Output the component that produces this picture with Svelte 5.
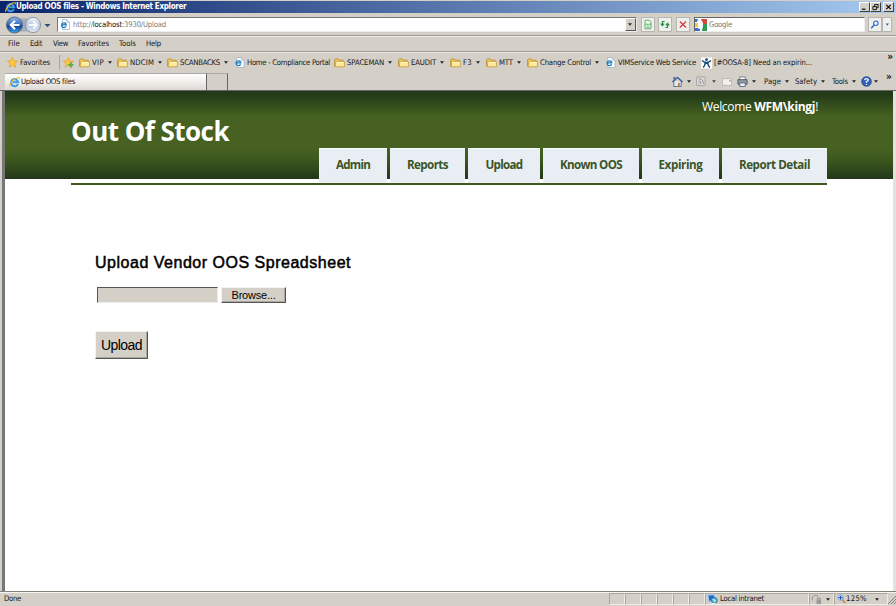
<script>
  const menus = [['File', 12, 22], ['Edit', 12, 23], ['View', 15, 25], ['Favorites', 31, 41], ['Tools', 17, 27], ['Help', 15, 30]];
  const favorites = [
    { icon: 'folder', label: 'VIP', text: 12, cell: 38, menu: true },
    { icon: 'folder', label: 'NDCIM', text: 24, cell: 50, menu: true },
    { icon: 'folder', label: 'SCANBACKS', text: 40, cell: 67, menu: true },
    { icon: 'page', label: 'Home - Compliance Portal', text: 83, cell: 100 },
    { icon: 'folder', label: 'SPACEMAN', text: 37, cell: 64, menu: true },
    { icon: 'folder', label: 'EAUDIT', text: 25, cell: 52, menu: true },
    { icon: 'folder', label: 'F3', text: 9, cell: 36, menu: true },
    { icon: 'folder', label: 'MTT', text: 14, cell: 41, menu: true },
    { icon: 'folder', label: 'Change Control', text: 51, cell: 78, menu: true },
    { icon: 'page', label: 'VIMService Web Service', text: 78, cell: 96 },
    { icon: 'person', label: '[#OOSA-8] Need an expirin...', text: 98, cell: 116 }
  ];
  const nav = [['Admin', 68, 34], ['Reports', 75, 41], ['Upload', 72, 37], ['Known OOS', 96, 62], ['Expiring', 77, 44], ['Report Detail', 105, 71]];

  // Spreads the letters so a label fills the given width.
  function fit(node, width) {
    const natural = node.getBoundingClientRect().width;
    node.style.letterSpacing = `${(width - natural) / node.textContent.length}px`;
  }
</script>

{#snippet ie()}
  <svg class="icon" viewBox="0 0 12 12" width="11" height="11">
    <path d="M9.7 7.8A3.9 3.9 0 1 1 10 5.8H4" fill="none" stroke="#3a9be6" stroke-width="2.2" />
    <path d="M1.1 11C-.8 8.3 6 .3 10.8.8c.8.2.8 1 .4 1.7" fill="none" stroke="#edba35" stroke-width="1.1" />
  </svg>
{/snippet}

{#snippet page()}
  <svg class="icon" viewBox="0 0 11 12" width="10" height="11">
    <path d="M2.5.5h5l3 3v8h-8z" fill="#fff" stroke="#94aebf" stroke-width=".8" />
    <path d="M7.5.5v3h3" fill="#d5e6ef" stroke="#94aebf" stroke-width=".7" />
    <path d="M6.7 8A2.6 2.6 0 1 1 7 6.5H2.3" fill="none" stroke="#197bb9" stroke-width="1.4" />
  </svg>
{/snippet}

{#snippet folder()}
  <svg class="icon" viewBox="0 0 12 11" width="11" height="10">
    <path d="M.6 9V1.8L1.5 1h3l1.2 1.4H10l.6.7V9z" fill="#edc65c" stroke="#ae8426" stroke-width=".8" />
    <path d="M2 4.2h9.4v5.5H1.1z" fill="#ffe99b" stroke="#c59731" stroke-width=".8" />
    <path d="M2.5 5h8.2" stroke="#fffbd3" />
  </svg>
{/snippet}

{#snippet person()}
  <svg class="icon" viewBox="0 0 12 12" width="11" height="12">
    <path fill="#fff" d="M0 0h12v12H0z" />
    <circle cx="6" cy="2.3" r="1.6" fill="#164d7b" />
    <path d="M1.2 3.4Q3 5.5 6 5.4 9 5.5 10.8 3.4M4.6 5.3Q4.9 8 2.4 11M7.4 5.3Q7.1 8 9.6 11M6 5v2" fill="none" stroke="#164d7b" stroke-width="1.7" />
  </svg>
{/snippet}

{#snippet arrow()}<svg class="arrow" viewBox="0 0 4 3" width="4" height="3"><path d="M0 .3h4L2 2.7z" fill="#222" /></svg>{/snippet}

{#snippet star(plus)}
  <svg class="icon" viewBox="0 0 12 12" width="11" height="11">
    <path d="m6 .6 1.6 3.6 4 .4-3 2.6.9 3.9L6 9.1l-3.5 2 .9-3.9-3-2.6 4-.4z" fill="#ffc642" stroke="#e99c2c" stroke-width=".8" />
    {#if plus}<path d="M8.5 5.5v6M5.5 8.5h6" stroke="#5cae48" stroke-width="2" />{/if}
  </svg>
{/snippet}

<div class="browser">
  <header class="titlebar">
    {@render ie()}
    <b><span use:fit={170}>Upload OOS files - Windows Internet Explorer</span></b>
    <div class="controls">
      <i><svg viewBox="0 0 8 8"><path d="M1 6.5h4" stroke="#000" stroke-width="1.3" /></svg></i>
      <i><svg viewBox="0 0 8 8"><path d="M3 3V1.2h4v3.6H5.5M1 3.5h4V7H1z" fill="none" stroke="#000" /></svg></i>
      <i class="close"><svg viewBox="0 0 8 8"><path d="m1.5 1.5 5 5m0-5-5 5" stroke="#000" stroke-width="1.3" /></svg></i>
    </div>
  </header>

  <div class="addressbar">
    <svg class="travel" viewBox="0 0 46 20" width="46" height="20">
      <defs>
        <linearGradient id="back" x2="0" y2="1"><stop stop-color="#8fb9ec" /><stop offset=".48" stop-color="#326ac2" /><stop offset=".52" stop-color="#103b94" /><stop offset="1" stop-color="#3aa6e8" /></linearGradient>
        <linearGradient id="next" x2="0" y2="1"><stop stop-color="#f4f8fc" /><stop offset=".5" stop-color="#b7c7dc" /><stop offset="1" stop-color="#dfeaf5" /></linearGradient>
      </defs>
      <rect x="7" y="3.5" width="25" height="13" rx="5" fill="#a6adb8" />
      <circle cx="8.5" cy="10" r="8" fill="url(#back)" stroke="#5a6880" />
      <path d="M13.5 10H5m4-4.2L4.8 10 9 14.2" fill="none" stroke="#fff" stroke-width="2.2" />
      <circle cx="27" cy="10" r="7.6" fill="url(#next)" stroke="#8c97a7" />
      <path d="M22.5 10H31m-3.7-3.6L31 10l-3.7 3.6" fill="none" stroke="#f7fbff" stroke-width="2" />
      <path d="M38.5 9h6l-3 3.2z" fill="#254e78" />
    </svg>
    <div class="address">
      {@render page()}
      <span class="url" use:fit={93}>http://<em>localhost</em>:3930/Upload</span>
      <i class="drop">{@render arrow()}</i>
    </div>
    <i class="tool compat"><svg viewBox="0 0 14 14"><path d="M3.5 2h5l2 2v8h-7z" fill="#eefbea" stroke="#55a35b" /><path d="m3.5 8 2-2 1.5 2 2-2 1.5 2M5 10h4" fill="none" stroke="#2da047" /></svg></i>
    <i class="tool refresh"><svg viewBox="0 0 14 14"><path d="M6.5 3.5H4v4M2 6l2 2.2L6 6M7.5 10.5H10v-4M8 8l2-2.2L12 8" fill="none" stroke="#249244" stroke-width="1.4" /></svg></i>
    <i class="tool stop"><svg viewBox="0 0 14 14"><path d="m3.3 3.5 7.2 7m0-7-7.2 7" stroke="#ce3943" stroke-width="1.5" /></svg></i>
    <div class="search">
      <svg viewBox="0 0 12 12" width="12" height="12"><path fill="#f5f7ff" d="M0 0h12v12H0z" /><path fill="#d8453c" d="M6 0h6v5H8z" /><path fill="#2f9b52" d="M8 5h4v7H7z" /><path fill="#3b6fcb" d="M0 0h3L2 3H0zm0 9h5v3H0z" /><path fill="#f7c633" d="M0 4h3v4H0z" /><path d="M7 3.2a2 1.7 0 1 0 0 2.2m0-3v5.4q0 2.2-3.4 1.5" fill="none" stroke="#fff" stroke-width="1.3" /></svg>
      <span use:fit={23}>Google</span>
    </div>
    <i class="tool find"><svg viewBox="0 0 14 14"><circle cx="8" cy="5.5" r="2.6" fill="#eef7ff" stroke="#2f67d4" stroke-width="1.3" /><path d="m6 7.5-3.5 3.8" stroke="#2f67d4" stroke-width="1.7" /></svg></i>
    <i class="tool more"><svg viewBox="0 0 9 14"><path d="M2.8 6h4L4.8 8.3z" fill="#3e67a3" /></svg></i>
  </div>

  <nav class="menubar">
    {#each menus as [name, width, cell]}
      <div style:width="{cell}px"><span use:fit={width}>{name}</span></div>
    {/each}
  </nav>

  <div class="favorites">
    <div class="fav main">{@render star(false)}<span use:fit={30}>Favorites</span></div>
    <div class="add">{@render star(true)}</div>
    {#each favorites as f}
      <div class="fav" style:width="{f.cell}px">
        {#if f.icon === 'folder'}{@render folder()}{:else if f.icon === 'page'}{@render page()}{:else}{@render person()}{/if}
        <span use:fit={f.text}>{f.label}</span>
        {#if f.menu}{@render arrow()}{/if}
      </div>
    {/each}
    <b class="chevron">»</b>
  </div>

  <div class="tabrow">
    <div class="tab">{@render ie()}<span use:fit={54}>Upload OOS files</span></div>
    <div class="newtab"></div>
    <div class="commands">
      <div style:width="24px"><svg viewBox="0 0 12 12" width="11" height="11"><path d="M2 6v5.5h8V6" fill="#e2ebf9" stroke="#546b92" /><path d="m.5 6.5 5.5-5 5.5 5" fill="none" stroke="#3c5d96" stroke-width="1.6" /><path d="M1.5 1h2v3h-2z" fill="#486d9f" /><path d="M6.5 7.5h2v4h-2z" fill="#c57d35" /></svg>{@render arrow()}</div>
      <div class="off" style:width="26px"><svg viewBox="0 0 12 12" width="10" height="11"><rect x=".5" y=".5" width="10.5" height="10.5" rx="1.5" fill="#ddd" stroke="#888" /><path d="M3 8.8h1M3 5.5q3 0 3 3.4M3 2.8q6 0 6 6" fill="none" stroke="#777" stroke-width="1.1" /></svg>{@render arrow()}</div>
      <div style:width="15px"><svg viewBox="0 0 12 9" width="10" height="8"><path d="M.5.5h11v8H.5z" fill="#f2f1ef" stroke="#b4b1ac" /><path d="M8.5 2h2v2h-2z" fill="#cf9696" /></svg></div>
      <div style:width="27px"><svg viewBox="0 0 12 12" width="11" height="11"><path d="M3 1h6v4H3z" fill="#fff" stroke="#777" /><path d="M1 4h10v5H1z" fill="#949aa3" stroke="#4f5660" /><path d="M3 7.5h6v4H3z" fill="#e6eefc" stroke="#5c6880" /></svg>{@render arrow()}</div>
      <div style:width="31px"><span use:fit={17}>Page</span>{@render arrow()}</div>
      <div style:width="37px"><span use:fit={22}>Safety</span>{@render arrow()}</div>
      <div style:width="29px"><span use:fit={16}>Tools</span>{@render arrow()}</div>
      <div class="help" style:width="25px"><svg viewBox="0 0 12 12" width="11" height="11"><circle cx="6" cy="6" r="5.3" fill="#315fbb" stroke="#183878" stroke-width=".7" /><path d="M4 4.5Q4.2 2.8 6 2.8t2 1.5Q8 5.4 6 6v1.4M6 8.6v1.3" fill="none" stroke="#fff" stroke-width="1.4" /></svg>{@render arrow()}</div>
      <b class="chevron">»</b>
    </div>
  </div>

  <main>
    <div class="banner">
      <div class="brand">
        <h1><span use:fit={158}>Out Of Stock</span></h1>
        <p><span use:fit={116}>Welcome <b>WFM\kingj</b>!</span></p>
      </div>
      <ul>
        {#each nav as [name, cell, width]}
          <li style:width="{cell}px"><span use:fit={width}>{name}</span></li>
        {/each}
      </ul>
    </div>
    <section>
      <h2><span use:fit={256}>Upload Vendor OOS Spreadsheet</span></h2>
      <div class="file"><div class="path"></div><div class="button browse"><span use:fit={44}>Browse...</span></div></div>
      <div class="button submit"><span use:fit={41}>Upload</span></div>
    </section>
  </main>

  <footer>
    <div class="done"><span use:fit={17}>Done</span></div>
    {#each Array(6) as _}<div class="pane"></div>{/each}
    <div class="pane zone">
      <svg viewBox="0 0 12 12" width="11" height="11"><path d="M1 1h7l1 6-7 1z" fill="#2468cc" stroke="#a6c8ec" /><circle cx="8" cy="7" r="3.2" fill="#48b8d4" stroke="#3276a4" /><path d="m5 10 5 1M6 6l3 1-1 2" stroke="#fff" fill="#66c164" /></svg>
      <span use:fit={44}>Local intranet</span>
    </div>
    <div class="pane protect"><svg viewBox="0 0 12 12" width="11" height="11"><path d="M2 7a3.5 3.5 0 0 1 6-4" fill="none" stroke="#a6a6a6" stroke-width="1.4" /><path d="M6 6h5v5H6z" fill="#999" /><path d="M7 6V4.5h3V6" fill="none" stroke="#888" /></svg>{@render arrow()}</div>
    <div class="pane zoom"><svg viewBox="0 0 10 11" width="9" height="10"><circle cx="4" cy="4" r="3" fill="#e4f2ff" stroke="#6f9dda" /><path d="M4 1.8v4.4M1.8 4h4.4" stroke="#1c56be" stroke-width="1.2" /><path d="m6 6 3 4" stroke="#b58d48" stroke-width="1.7" /></svg><span use:fit={21}>125%</span>{@render arrow()}</div>
    <svg class="grip" viewBox="0 0 8 10" width="8" height="10"><path d="m0 10 8-8M3 10l5-5M6 10l2-2" stroke="#86837d" /></svg>
  </footer>
</div>

<style>
  :global(body) { margin: 0; background: #fff; }
  * { box-sizing: border-box; }
  .browser { width: 896px; height: 606px; overflow: hidden; display: flex; flex-direction: column; background: #d4d0c8; color: #151515; font: 7.7px/10px 'DejaVu Sans Condensed', 'DejaVu Sans', sans-serif; white-space: nowrap; }
  svg, i { display: block; flex: none; }
  span { display: inline-block; white-space: pre; flex: none; }
  em { font-style: normal; color: #111; }
  .titlebar { height: 12px; flex: none; margin-top: 1px; padding: 0 2px 0 5px; display: flex; align-items: center; background: linear-gradient(90deg, #0a246a, #a6caf0); color: #fff; font-size: 8px; }
  .controls { display: flex; margin-left: auto; }
  .controls i { width: 11px; height: 10px; padding: 0 1px; background: #d4d0c8; border: 1px solid; border-color: #fff #404040 #404040 #fff; }
  .controls .close { margin-left: 2px; }
  .controls svg { width: 7px; height: 8px; }
  .addressbar { height: 22px; flex: none; display: flex; align-items: center; padding: 1px 3px 0 6px; }
  .travel { margin-right: 5px; }
  .address { width: 580px; height: 15px; display: flex; align-items: center; padding-left: 2px; background: #fff; border: 1px solid; border-color: #777 #eee #eee #777; }
  .url { margin-left: 3px; color: #808080; }
  .drop { width: 11px; height: 13px; margin-left: auto; padding: 4px 2px; background: #d4d0c8; border: 1px solid; border-color: #fff #555 #555 #fff; }
  .tool { width: 14px; height: 15px; background: #efefec; border: 1px solid #b6b5b1; }
  .tool svg { width: 100%; height: 100%; }
  .compat { margin-left: 4px; }
  .refresh { margin-left: 3px; }
  .stop { margin-left: 4px; }
  .search { width: 171px; height: 15px; margin: 0 3px 0 4px; display: flex; align-items: center; gap: 2px; background: #fff; border: 1px solid; border-color: #666 #eee #eee #666; color: #777; }
  .more { width: 10px; }
  .menubar { height: 16px; flex: none; display: flex; align-items: center; padding: 1px 0 0 8px; border-top: 1px solid #9d9a94; box-shadow: inset 0 1px #eeece7; }
  .favorites { height: 22px; flex: none; display: flex; align-items: center; padding-left: 7px; border-top: 1px solid #9d9a94; box-shadow: inset 0 1px #e9e7e1; }
  .fav { display: flex; align-items: center; flex: none; }
  .fav .icon { width: 11px; margin-right: 2px; }
  .fav .arrow { margin-left: 4px; }
  .main { width: 52px; }
  .add { width: 20px; height: 15px; padding: 2px 0 0 3px; border-left: 1px solid #aaa69e; }
  .chevron { font-size: 10px; margin: -12px 0 0 auto; padding-right: 3px; }
  .tabrow { height: 18px; flex: none; display: flex; border-bottom: 1px solid #666; }
  .tab { width: 202px; height: 17px; margin-left: 5px; padding-left: 4px; display: flex; align-items: center; gap: 1px; background: linear-gradient(#fff, #efeeeb 50%, #dcd9d3); border-top: 1px solid #aaa; border-right: 1px solid #666; }
  .newtab { width: 21px; border-top: 1px solid #aaa; border-right: 1px solid #666; }
  .commands { flex: 1; margin-left: 444px; display: flex; align-items: center; }
  .commands > div { display: flex; align-items: center; gap: 4px; }
  .commands .off { gap: 6px; opacity: .75; }
  .commands .help { gap: 2px; }
  .commands .chevron { margin-top: -9px; margin-left: 0; }
  main { height: 500px; flex: none; background: #fff; border-left: 3px solid #777; margin-left: 2px; border-right: 3px solid #e4e2df; }
  .banner { height: 88px; padding: 0 66px; background: linear-gradient(#223719 0, #253d18 6%, #466121 29%, #466121 65%, #3e591e 77%, #223719 100%); font-family: 'Open Sans', sans-serif; color: #fff; }
  .brand { height: 57px; display: flex; justify-content: space-between; }
  h1 { margin: 22px 0 0; font-size: 26px; line-height: 36px; font-weight: 700; }
  .brand p { margin: 7px 9px 0 0; font-size: 12px; line-height: 18px; }
  p b { font-weight: 700; }
  ul { display: flex; justify-content: flex-end; gap: 3px; height: 37px; margin: 0; padding: 0; list-style: none; border-bottom: 2px solid #405820; }
  li { height: 35px; flex: none; background: #e8eef4; border-top: 1px solid #f8faf8; color: #3b5428; text-align: center; font-size: 11.6px; line-height: 32px; font-weight: 700; }
  section { padding: 73px 0 0 90px; font-family: 'Liberation Sans', Arial, sans-serif; color: #000; }
  h2 { margin: 0; font-size: 16px; line-height: 22px; font-weight: 400; -webkit-text-stroke: .5px #000; }
  .file { display: flex; gap: 3px; margin: 13px 0 0 2px; }
  .path { width: 121px; height: 16px; background: #d4d0c8; border: 1px solid; border-color: #555 #eee #eee #555; }
  .button { display: flex; align-items: center; justify-content: center; background: #d4d0c8; border: 1px solid; border-color: #f4f3ef #555 #555 #f4f3ef; box-shadow: inset -1px -1px #aaa79f; }
  .browse { width: 65px; height: 16px; font-size: 11px; }
  .submit { width: 53px; height: 28px; margin-top: 28px; font-size: 14px; line-height: 18px; }
  footer { height: 15px; flex: none; display: flex; align-items: center; border-top: 1px solid #858178; box-shadow: inset 0 1px #f5f4f0; }
  .done { width: 609px; padding-left: 4px; }
  .pane { width: 16px; height: 12px; flex: none; border: 1px solid; border-color: #aaa69e #eeece7 #eeece7 #aaa69e; display: flex; align-items: center; }
  .zone { width: 104px; padding-left: 1px; gap: 2px; }
  .protect { width: 25px; padding-left: 1px; gap: 4px; }
  .zoom { width: 54px; padding-left: 2px; }
  .zoom .arrow { margin-left: 8px; }
</style>
